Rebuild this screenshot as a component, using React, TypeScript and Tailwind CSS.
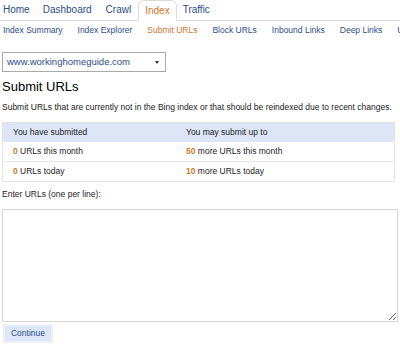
export default function App() {
  const subs = ["Index Summary", "Index Explorer", "Submit URLs", "Block URLs", "Inbound Links", "Deep Links", "URL Normalization"];
  return (
    <div className="w-[400px] h-[344px] overflow-hidden bg-white font-['Liberation_Sans',Arial,sans-serif] text-[#222]">
      {/* top tabs */}
      <div className="flex h-[21px] items-end border-b border-[#dcdcdc] pl-[3px] text-[10px]">
        <div className="flex h-[21px] items-center text-[#2d4d8c]">Home</div>
        <div className="ml-[13px] flex h-[21px] items-center text-[#2d4d8c]">Dashboard</div>
        <div className="ml-[14px] flex h-[21px] items-center text-[#2d4d8c]">Crawl</div>
        <div className="-mb-px ml-[7px] flex h-[21px] items-center rounded-t-[6px] border border-[#dcdcdc] border-b-white bg-white px-[6px] text-[#d2762c]">
          Index
        </div>
        <div className="ml-[6px] flex h-[21px] items-center text-[#2d4d8c]">Traffic</div>
      </div>
      {/* sub nav */}
      <div className="flex h-[18px] items-center gap-[15px] whitespace-nowrap pl-[3px] text-[8.5px]">
        {subs.map((s) => (
          <span key={s} className={s === "Submit URLs" ? "text-[#d2762c]" : "text-[#2d4d8c]"}>
            {s}
          </span>
        ))}
      </div>
      <div className="px-[2px]">
        <div className="mt-[13px] flex h-[20px] w-[164px] items-center justify-between border border-[#a9a9a9] pl-[4px] pr-[6px] text-[9.5px] text-[#2d4d8c]">
          <span>www.workinghomeguide.com</span>
          <span className="h-0 w-0 border-x-[2.5px] border-t-[3px] border-x-transparent border-t-[#333]" />
        </div>
        <h1 className="mt-[5px] text-[13px] leading-[20px] text-black">Submit URLs</h1>
        <p className="mt-[4px] whitespace-nowrap text-[8.5px] leading-[12px]">
          Submit URLs that are currently not in the Bing index or that should be reindexed due to recent changes.
        </p>
        <div className="mt-[9px] w-[393px] border border-[#e2e2e2] text-[8.5px]">
          <div className="flex h-[19px] items-center bg-[#dce6f6]">
            <span className="w-[183px] pl-[10px]">You have submitted</span>
            <span>You may submit up to</span>
          </div>
          <div className="flex h-[20px] items-center border-b border-[#e6e6e6]">
            <span className="w-[183px] pl-[10px]">
              <b className="text-[#d2762c]">0</b> URLs this month
            </span>
            <span>
              <b className="text-[#d2762c]">50</b> more URLs this month
            </span>
          </div>
          <div className="flex h-[19px] items-center">
            <span className="w-[183px] pl-[10px]">
              <b className="text-[#d2762c]">0</b> URLs today
            </span>
            <span>
              <b className="text-[#d2762c]">10</b> more URLs today
            </span>
          </div>
        </div>
        <p className="mt-[6px] text-[8.5px] leading-[12px]">Enter URLs (one per line):</p>
        <textarea className="mt-[9px] block h-[113px] w-[396px] resize-y border border-[#d8d8d8] outline-none" />
        <button className="mt-[2px] ml-[1px] flex h-[19px] w-[50px] items-center justify-center border-2 border-[#eef1f6] bg-[#dce6f6] text-[8.5px] text-[#2d4d8c]">
          Continue
        </button>
      </div>
    </div>
  );
}
